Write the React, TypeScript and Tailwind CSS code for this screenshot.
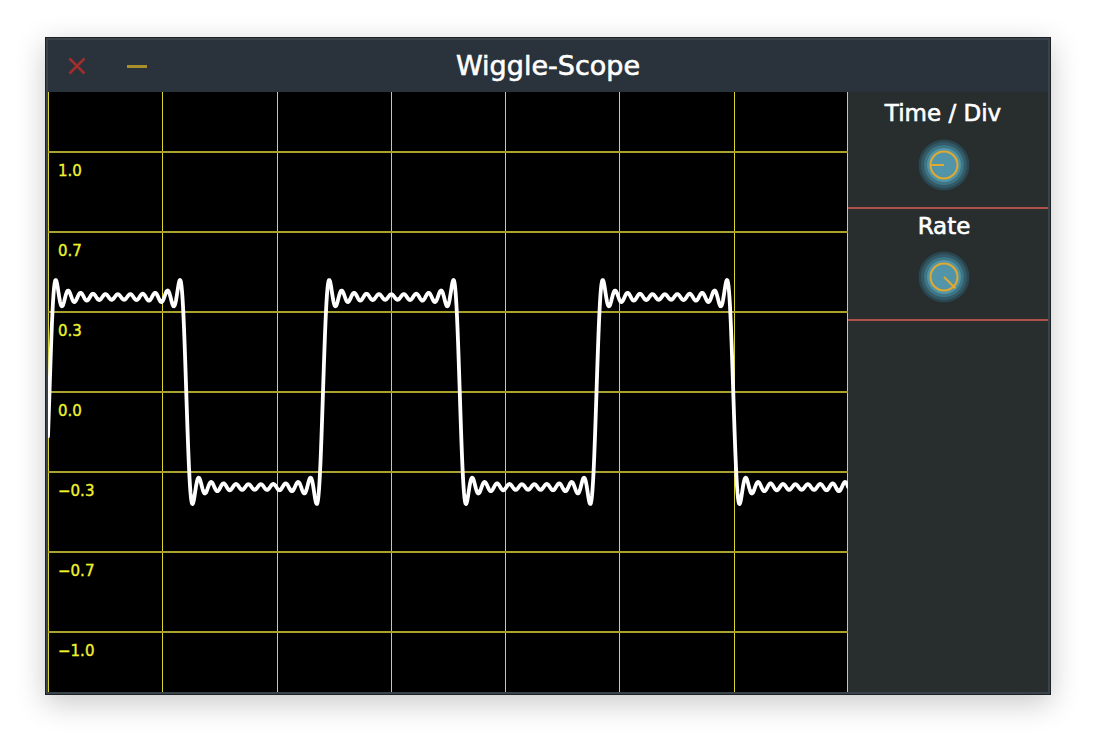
import React from 'react';

const W = 800;
const H = 600;
const PERIOD = 273.5;
const X0 = 1.5;
const AMP = 95;
const TERMS = 11;

const wavePath = (): string => {
  const pts: string[] = [];
  for (let x = 0; x <= W; x += 0.5) {
    const t = (2 * Math.PI * (x - X0)) / PERIOD;
    let s = 0;
    for (let k = 1; k <= TERMS; k++) {
      const n = 2 * k - 1;
      s += Math.sin(n * t) / n;
    }
    const y = H / 2 - AMP * (4 / Math.PI) * s;
    pts.push(`${x.toFixed(1)},${y.toFixed(2)}`);
  }
  return 'M' + pts.join(' L');
};

const labels = ['1.0', '0.7', '0.3', '0.0', '\u22120.3', '\u22120.7', '\u22121.0'];

const Scope: React.FC = () => {
  const path = wavePath();
  return (
    <svg width={W} height={H} viewBox={`0 0 ${W} ${H}`} className="block bg-black shrink-0">
      {Array.from({ length: 8 }).map((_, i) => {
        const x = Math.min(Math.round((W / 7) * i), W - 1) + 0.5;
        return <line key={`v${i}`} x1={x} y1={0} x2={x} y2={H} stroke="#dcd42e" strokeWidth={1} shapeRendering="crispEdges" />;
      })}
      {labels.map((l, i) => {
        const y = 60 + i * 80;
        return (
          <g key={l}>
            <line x1={0} y1={y} x2={W} y2={y} stroke="#aaa22e" strokeWidth={2} shapeRendering="crispEdges" />
            <text
              x={10}
              y={y + 24}
              fill="#f2f22e"
              stroke="#f2f22e"
              strokeWidth={0.35}
              fontSize={15}
              style={{ fontFamily: '"DejaVu Sans", sans-serif' }}
            >
              {l}
            </text>
          </g>
        );
      })}
      <path d={path} fill="none" stroke="#ffffff" strokeWidth={3.8} strokeLinejoin="round" strokeLinecap="round" />
    </svg>
  );
};

const Knob: React.FC<{ angle: number }> = ({ angle }) => {
  const a = (angle * Math.PI) / 180;
  const len = angle === 180 ? 13.5 : 16;
  return (
    <svg width={52} height={52} viewBox="0 0 52 52" className="block">
      <circle cx={26} cy={26} r={25.5} fill="#2a4650" />
      <circle cx={26} cy={26} r={23} fill="#335b67" />
      <circle cx={26} cy={26} r={20} fill="#3e7686" />
      <circle cx={26} cy={26} r={17} fill="#5295a8" />
      <circle cx={26} cy={26} r={13.5} fill="none" stroke="#e2a92e" strokeWidth={2} />
      <line
        x1={26}
        y1={26}
        x2={26 + Math.cos(a) * len}
        y2={26 + Math.sin(a) * len}
        stroke="#e2a92e"
        strokeWidth={2}
      />
    </svg>
  );
};

const App: React.FC = () => {
  return (
    <div className="min-h-screen bg-white pl-[45px] pt-[37px]" style={{ fontFamily: '"DejaVu Sans", sans-serif' }}>
      <div className="w-[1006px] border border-[#1d2125] shadow-[0_8px_28px_rgba(0,0,0,0.22)]">
        <div className="border-2 border-[#3b434a] bg-[#2a333b]">
          <div className="h-[52px] flex items-center">
            <div className="w-[130px] flex items-center pl-[20px]">
              <svg width={18} height={18} viewBox="0 0 18 18" className="block">
                <path d="M1.5 1.5 L16.5 16.5 M16.5 1.5 L1.5 16.5" stroke="#a22d2d" strokeWidth={2.6} />
              </svg>
              <div className="ml-[41px] w-[20px] h-[3px] bg-[#a88f2c]" />
            </div>
            <div className="flex-1 text-center text-white text-[27px] leading-none pb-[2px] [-webkit-text-stroke:0.6px_#ffffff]">
              Wiggle-Scope
            </div>
            <div className="w-[130px]" />
          </div>
          <div className="flex">
            <Scope />
            <div className="w-[200px] bg-[#282d2e] text-white">
              <div className="flex flex-col items-center pt-[7px] pb-[16px]">
                <div className="text-[23px] leading-[28px] pr-[10px] [-webkit-text-stroke:0.6px_#ffffff]">Time / Div</div>
                <div className="mt-[12px] pr-[8px]">
                  <Knob angle={180} />
                </div>
              </div>
              <div className="h-[2px] bg-[#b0504a]" />
              <div className="flex flex-col items-center pt-[3px] pb-[16px]">
                <div className="text-[23px] leading-[28px] pr-[8px] [-webkit-text-stroke:0.6px_#ffffff]">Rate</div>
                <div className="mt-[11px] pr-[8px]">
                  <Knob angle={45} />
                </div>
              </div>
              <div className="h-[2px] bg-[#b0504a]" />
            </div>
          </div>
        </div>
      </div>
    </div>
  );
};

export default App;
